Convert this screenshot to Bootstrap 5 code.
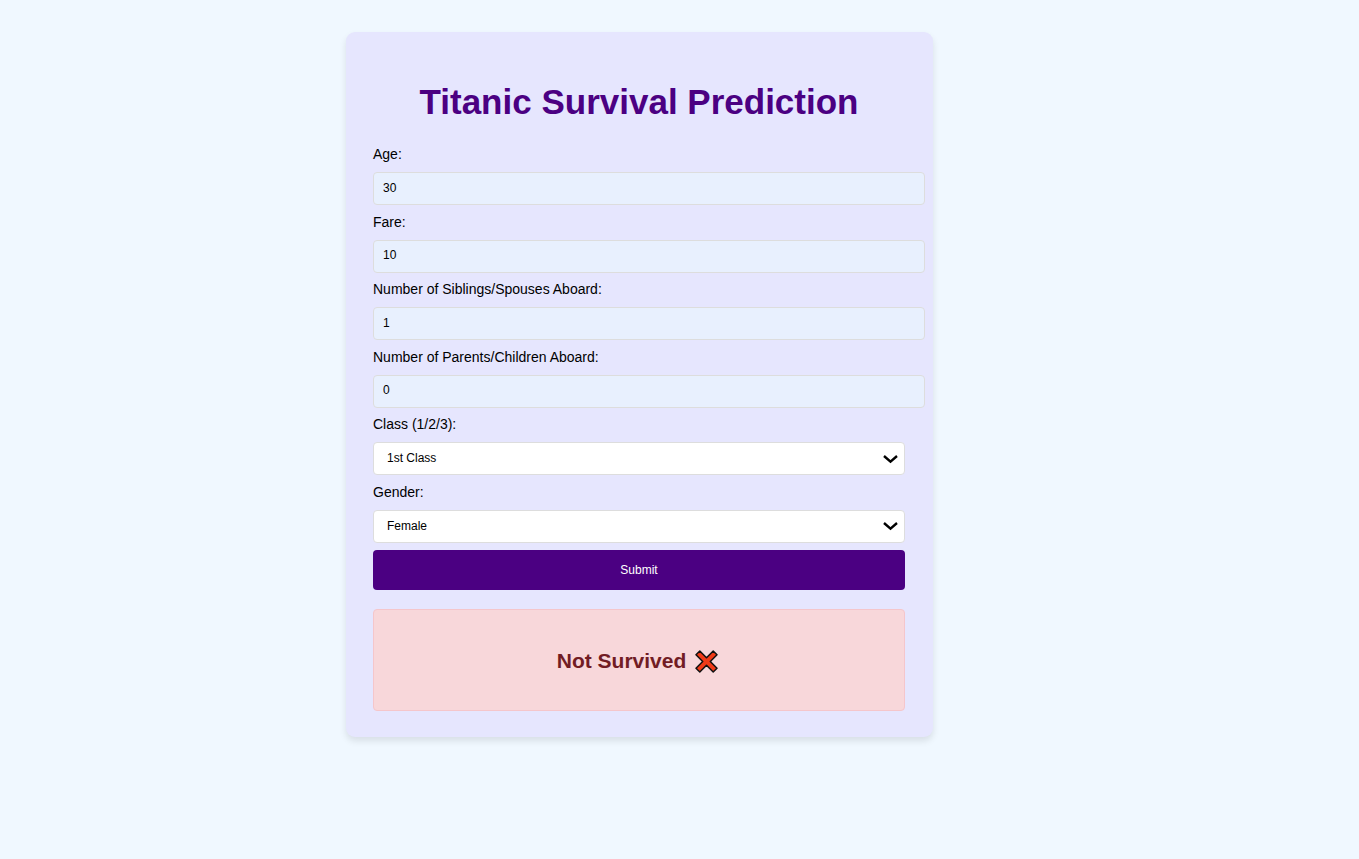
<!DOCTYPE html>
<html lang="en">
<head>
<meta charset="utf-8">
<meta name="viewport" content="width=device-width, initial-scale=1">
<title>Titanic Survival Prediction</title>
<link href="https://cdn.jsdelivr.net/npm/bootstrap@5.3.0/dist/css/bootstrap.min.css" rel="stylesheet">
<style>
  body { background: #f0f8ff; color: #000; font-family: "Liberation Sans", Arial, sans-serif; font-size: 14px; }
  .page { padding: 32px 80px 32px 0; }
  .panel { max-width: 587px; padding: 49px 28px 26px 27px; background: #e6e6fe; border-radius: 9px; box-shadow: 0 4px 7px rgba(0, 0, 0, .1); }
  .title { color: #4b0082; font-size: 35px; line-height: 42px; font-weight: 700; margin-bottom: 22px; }
  /* six equal rows share the height of the field block */
  .fields { display: grid; grid-auto-rows: 1fr; min-height: 405px; }
  .fields label { display: block; line-height: 18px; margin-bottom: 9px; }
  .fields .form-control, .fields .form-select { height: 33px; border: 1px solid #ddd; border-radius: 4px; color: #000; font-size: 12px; line-height: 15px; }
  .fields .form-control { width: calc(100% + 20px); padding: 7px 9px 9px; background: #e8f0fe; }
  .fields .form-select { padding: 8px 32px 8px 13px; background-color: #fff; background-position: right 6px center; background-size: 16px 16px;
    background-image: url("data:image/svg+xml,%3Csvg xmlns='http://www.w3.org/2000/svg' viewBox='0 0 16 16'%3E%3Cpath fill='none' stroke='%23000' stroke-width='2.4' d='M2 5 8.500 10.600l6.500-5.600'/%3E%3C/svg%3E"); }
  .btn-send { height: 40px; background: #4b0082; color: #fff; font-size: 12px; border: 0; border-radius: 4px; }
  .btn-send:hover { background: #5d1a91; color: #fff; }
  .outcome { min-height: 102px; margin-top: 19px; padding: 2px 3px 0 0; background: #f8d7da; border: 1px solid #f5c6cb; border-radius: 4px; color: #721c24; gap: 9px; }
  .outcome h2 { font-size: 21px; line-height: 24px; font-weight: 700; }
</style>
</head>
<body>
<main class="page">
  <div class="panel mx-auto">
    <h1 class="title text-center">Titanic Survival Prediction</h1>
    <form onsubmit="return false">
      <div class="fields">
        <div><label for="age">Age:</label><input class="form-control" id="age" type="text" value="30"></div>
        <div><label for="fare">Fare:</label><input class="form-control" id="fare" type="text" value="10"></div>
        <div><label for="sibsp">Number of Siblings/Spouses Aboard:</label><input class="form-control" id="sibsp" type="text" value="1"></div>
        <div><label for="parch">Number of Parents/Children Aboard:</label><input class="form-control" id="parch" type="text" value="0"></div>
        <div><label for="pclass">Class (1/2/3):</label><select class="form-select" id="pclass"><option>1st Class</option><option>2nd Class</option><option>3rd Class</option></select></div>
        <div><label for="gender">Gender:</label><select class="form-select" id="gender"><option>Female</option><option>Male</option></select></div>
      </div>
      <button class="btn btn-send w-100 d-block" type="submit">Submit</button>
    </form>
    <div class="outcome d-flex align-items-center justify-content-center">
      <h2 class="mb-0">Not Survived</h2>
      <svg width="23" height="23" viewBox="0 0 23 23" aria-hidden="true"><path fill="#f03a17" stroke="#111" stroke-width="1.5" stroke-linejoin="round" d="M4.800 1 11.500 7.700 18.200 1 22 4.800 15.300 11.500 22 18.200 18.200 22 11.500 15.300 4.800 22 1 18.200 7.700 11.500 1 4.800z"/></svg>
    </div>
  </div>
</main>
<script src="https://cdn.jsdelivr.net/npm/bootstrap@5.3.0/dist/js/bootstrap.bundle.min.js"></script>
</body>
</html>
